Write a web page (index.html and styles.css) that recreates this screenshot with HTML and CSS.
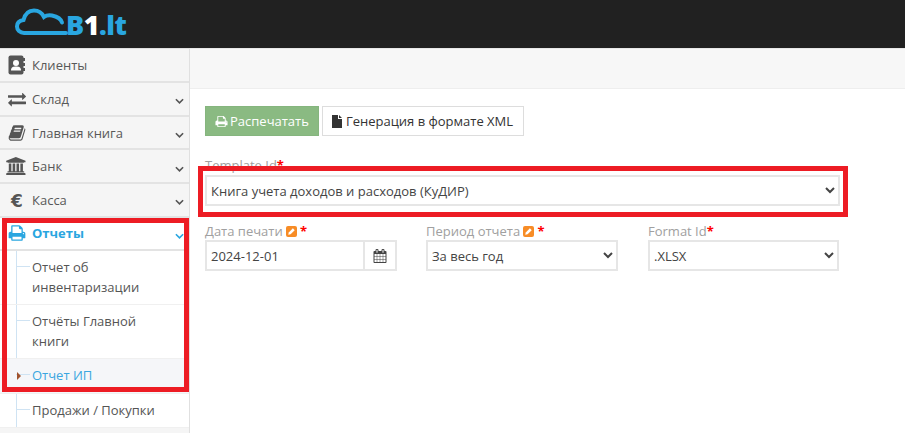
FILE: index.html
```html
<!DOCTYPE html>
<html lang="ru">
<head>
<meta charset="utf-8">
<title>B1.lt</title>
<link rel="stylesheet" href="styles.css">
</head>
<body>
<header class="topbar">
  <div class="logo">
    <svg class="logo-cloud" width="52" height="26" viewBox="0 0 52 26"><path d="M51 24H9C5 24 2 21 2 17.500C2 14 4.500 11.500 8.500 11C10 5 14 1.500 19 1.500C23.500 1.500 27 4 29 8C31 6.500 34 6 37 6.500C42 7.500 46 10 47 13.500" fill="none" stroke="#29a6e0" stroke-width="4" stroke-linecap="round"/></svg>
    <span class="logo-text"><span class="logo-b">B</span><span class="logo-one">1</span><span class="logo-b">.lt</span></span>
  </div>
</header>
<div class="main">
  <nav class="sidebar">
    <a class="item"><span class="ic"><svg width="17" height="20" viewBox="0 0 17 20"><rect x="0.500" y="0.500" width="15" height="19" rx="2" fill="#555"/><rect x="15" y="3" width="2" height="3" fill="#555"/><rect x="15" y="8" width="2" height="3" fill="#555"/><rect x="15" y="13" width="2" height="3" fill="#555"/><circle cx="8" cy="8" r="3" fill="#fff"/><path d="M3 15.500C3 12 5 11.500 8 11.500S13 12 13 15.500Z" fill="#fff"/></svg></span><span class="label">Клиенты</span></a>
    <a class="item"><span class="ic"><svg width="18" height="18" viewBox="0 0 1792 1792"><path fill="#555" d="M1792 1184v192q0 13-9.500 22.500t-22.500 9.500h-1376v192q0 13-9.500 22.500t-22.500 9.500q-12 0-24-10l-319-320q-9-9-9-22 0-14 9-23l320-320q9-9 23-9 13 0 22.500 9.500t9.500 22.500v192h1376q13 0 22.500 9.500t9.500 22.500zm0-544q0 14-9 23l-320 320q-9 9-23 9-13 0-22.500-9.500t-9.500-22.500v-192h-1376q-13 0-22.500-9.500t-9.500-22.500v-192q0-13 9.500-22.500t22.500-9.500h1376v-192q0-14 9-23t23-9q12 0 24 10l319 319q9 9 9 23z"/></svg></span><span class="label">Склад</span><svg class="chev" width="9" height="6" viewBox="0 0 10 6"><path d="M1 1L5 5L9 1" fill="none" stroke="#555" stroke-width="1.800"/></svg></a>
    <a class="item"><span class="ic"><svg width="18" height="18" viewBox="0 0 1792 1792"><path fill="#555" d="M1703 478q40 57 18 129l-275 906q-19 64-76.500 107.500t-122.500 43.500h-923q-77 0-148.500-53.500t-99.500-131.500q-24-67-2-127 0-4 3-27t4-37q1-8-3-21.500t-3-19.500q2-11 8-21t16.500-23.500 16.500-23.500q23-38 45-91.500t30-91.500q3-10 .5-30t-.5-28q3-11 17-28t17-23q21-36 42-92t25-90q1-9-2.500-32t.5-28q4-13 22-30.500t22-22.500q19-26 42.500-84.500t27.500-96.500q1-8-3-25.500t-2-26.500q2-8 9-18t18-23 17-21q8-12 16.500-30.500t15-35 16-36 19.500-32 26.500-23.500 36-11.500 47.500 5.500l-1 3q38-9 51-9h761q74 0 114 56t18 130l-274 906q-36 119-71.500 153.500t-128.500 34.500h-869q-27 0-38 15-11 16-1 43 24 70 144 70h923q29 0 56-15.500t35-41.500l300-987q7-22 5-57 38 15 59 43zm-1064 2q-4 13 2 22.500t20 9.500h608q13 0 25.500-9.500t16.500-22.500l21-64q4-13-2-22.500t-20-9.500h-608q-13 0-25.500 9.500t-16.500 22.500zm-83 256q-4 13 2 22.500t20 9.500h608q13 0 25.500-9.500t16.500-22.500l21-64q4-13-2-22.500t-20-9.500h-608q-13 0-25.500 9.500t-16.500 22.500z"/></svg></span><span class="label">Главная книга</span><svg class="chev" width="9" height="6" viewBox="0 0 10 6"><path d="M1 1L5 5L9 1" fill="none" stroke="#555" stroke-width="1.800"/></svg></a>
    <a class="item"><span class="ic"><svg width="21" height="18" viewBox="0 0 2048 1792"><path fill="#555" d="M960 0l960 384v128h-128q0 26-20.500 45t-48.500 19h-1526q-28 0-48.500-19t-20.500-45h-128v-128zm-704 640h256v768h128v-768h256v768h128v-768h256v768h128v-768h256v768h59q28 0 48.500 19t20.500 45v64h-1664v-64q0-26 20.500-45t48.500-19h59v-768zm1595 960q28 0 48.500 19t20.500 45v128h-1920v-128q0-26 20.500-45t48.500-19h1782z"/></svg></span><span class="label">Банк</span><svg class="chev" width="9" height="6" viewBox="0 0 10 6"><path d="M1 1L5 5L9 1" fill="none" stroke="#555" stroke-width="1.800"/></svg></a>
    <a class="item"><span class="ic ic-euro">€</span><span class="label">Касса</span><svg class="chev" width="9" height="6" viewBox="0 0 10 6"><path d="M1 1L5 5L9 1" fill="none" stroke="#555" stroke-width="1.800"/></svg></a>
    <a class="item item-active"><span class="ic"><svg width="18" height="18" viewBox="0 0 1792 1792"><path fill="#29a6e0" d="M448 1536h896v-256h-896v256zm0-640h896v-384h-160q-40 0-68-28t-28-68v-160h-640v640zm1152 64q0-26-19-45t-45-19-45 19-19 45 19 45 45 19 45-19 19-45zm128 0v416q0 13-9.500 22.500t-22.500 9.500h-224v160q0 40-28 68t-68 28h-960q-40 0-68-28t-28-68v-160h-224q-13 0-22.500-9.500t-9.500-22.500v-416q0-79 56.500-135.500t135.500-56.500h64v-544q0-40 28-68t68-28h672q40 0 88 20t76 48l152 152q28 28 48 76t20 88v256h64q79 0 135.500 56.500t56.500 135.500z"/></svg></span><span class="label">Отчеты</span><svg class="chev" width="9" height="6" viewBox="0 0 10 6"><path d="M1 1L5 5L9 1" fill="none" stroke="#29a6e0" stroke-width="1.800"/></svg></a>
    <ul class="submenu">
      <li class="sub">Отчет об инвентаризации</li>
      <li class="sub">Отчёты Главной книги</li>
      <li class="sub sub-current"><span class="caret"></span>Отчет ИП</li>
      <li class="sub">Продажи / Покупки</li>
    </ul>
  </nav>
  <main class="content">
    <div class="breadcrumbs"></div>
    <div class="body">
      <div class="actions">
        <button class="btn btn-green"><svg width="13" height="13" viewBox="0 0 1792 1792"><path fill="#fff" d="M448 1536h896v-256h-896v256zm0-640h896v-384h-160q-40 0-68-28t-28-68v-160h-640v640zm1152 64q0-26-19-45t-45-19-45 19-19 45 19 45 45 19 45-19 19-45zm128 0v416q0 13-9.500 22.500t-22.500 9.500h-224v160q0 40-28 68t-68 28h-960q-40 0-68-28t-28-68v-160h-224q-13 0-22.500-9.500t-9.500-22.500v-416q0-79 56.500-135.500t135.500-56.500h64v-544q0-40 28-68t68-28h672q40 0 88 20t76 48l152 152q28 28 48 76t20 88v256h64q79 0 135.500 56.500t56.500 135.500z"/></svg>Распечатать</button>
        <button class="btn btn-white"><svg width="10" height="13" viewBox="0 0 10 13"><path d="M0 0H6V4H10V13H0ZM7 0L10 3H7Z" fill="#333"/></svg>Генерация в формате XML</button>
      </div>
      <div class="field field-wide">
        <label class="lbl">Template Id<span class="req">*</span></label>
        <select class="ctl"><option>Книга учета доходов и расходов (КуДИР)</option></select>
      </div>
      <div class="row">
        <div class="field">
          <label class="lbl">Дата печати<span class="edit"><svg width="11" height="11" viewBox="0 0 12 12"><path d="M2.500 9.500L3 7L7.500 2.500L9.500 4.500L5 9Z" fill="#fff"/></svg></span> <span class="req">*</span></label>
          <div class="date"><input class="date-input" value="2024-12-01"><span class="addon"><svg width="14" height="14" viewBox="0 0 1792 1792"><path fill="#444" d="M192 1664h288v-288h-288v288zm352 0h320v-288h-320v288zm-352-352h288v-320h-288v320zm352 0h320v-320h-320v320zm-352-384h288v-288h-288v288zm736 736h320v-288h-320v288zm-384-736h320v-288h-320v288zm768 736h288v-288h-288v288zm-384-352h320v-320h-320v320zm-352-864v-288q0-13-9.500-22.500t-22.500-9.500h-64q-13 0-22.500 9.500t-9.500 22.500v288q0 13 9.500 22.500t22.500 9.500h64q13 0 22.500-9.500t9.500-22.500zm736 864h288v-320h-288v320zm-384-384h320v-288h-320v288zm384 0h288v-288h-288v288zm32-480v-288q0-13-9.500-22.500t-22.500-9.500h-64q-13 0-22.500 9.500t-9.500 22.500v288q0 13 9.500 22.500t22.500 9.500h64q13 0 22.500-9.500t9.500-22.500zm384-64v1280q0 52-38 90t-90 38h-1408q-52 0-90-38t-38-90v-1280q0-52 38-90t90-38h128v-96q0-66 47-113t113-47h64q66 0 113 47t47 113v96h384v-96q0-66 47-113t113-47h64q66 0 113 47t47 113v96h128q52 0 90 38t38 90z"/></svg></span></div>
        </div>
        <div class="field">
          <label class="lbl">Период отчета<span class="edit"><svg width="11" height="11" viewBox="0 0 12 12"><path d="M2.500 9.500L3 7L7.500 2.500L9.500 4.500L5 9Z" fill="#fff"/></svg></span> <span class="req">*</span></label>
          <select class="ctl"><option>За весь год</option></select>
        </div>
        <div class="field field-format">
          <label class="lbl">Format Id<span class="req">*</span></label>
          <select class="ctl"><option>.XLSX</option></select>
        </div>
      </div>
    </div>
  </main>
</div>
<div class="mark mark-side"></div>
<div class="mark mark-form"></div>
</body>
</html>
```
FILE: styles.css
```css
* { box-sizing: border-box; }
html, body { margin: 0; height: 433px; overflow: hidden; }
body { font-family: "Open Sans", sans-serif; font-size: 13px; color: #555; background: #fff; position: relative; }
.topbar { height: 48px; background: #212121; padding: 9px 0 0 15px; }
.logo { display: flex; align-items: flex-start; }
.logo-cloud { flex: none; overflow: visible; }
.logo-text { font-family: "Open Sans", sans-serif; font-weight: 800; font-size: 27px; line-height: 30px; margin-left: -1px; margin-top: 1px; letter-spacing: -.5px; color: #29a6e0; }
.logo-one { color: #fff; }
.main { display: flex; height: 385px; }
.sidebar { width: 190px; flex: none; background: #f5f5f5; border-right: 1px solid #e0e0e0; border-top: 1px solid #e0e0e0; padding-top: .6px; }
.item { display: flex; align-items: center; height: 33.6px; border-bottom: 2px solid #e3e3e3; padding-right: 5px; color: #585858; }
.ic { width: 32px; flex: none; display: flex; justify-content: center; padding-left: 1px; }
.ic-euro { font-family: "DejaVu Sans", sans-serif; font-weight: 700; font-size: 17px; line-height: 20px; color: #555; padding: 2px 0 0 2px; }
.label { flex: 1; font-size: 13px; }
.chev { flex: none; margin-top: 5px; }
.item-active { background: #fff; color: #29a6e0; font-weight: 700; }
.submenu { list-style: none; margin: 0; padding: 0; background: #fff; position: relative; }
.submenu::before { content: ""; position: absolute; left: 16px; top: 0; bottom: 0; border-left: 1px solid #cfe3f3; }
.sub { padding: 7px 20px 7px 32px; line-height: 19.500px; font-size: 13px; border-bottom: 1px solid #f0f0f0; position: relative; color: #555; }
.sub::before { content: ""; position: absolute; left: 16px; top: 15px; width: 14px; border-top: 1px solid #cfe3f3; }
.sub-current { background: #f5f6f9; color: #3aa6e0; }
.caret { position: absolute; left: 17px; top: 13px; border-left: 4px solid #a0522d; border-top: 4px solid transparent; border-bottom: 4px solid transparent; z-index: 1; }
.content { flex: 1; min-width: 0; }
.breadcrumbs { height: 41px; background: #f7f7f7; border-top: 1px solid #e8e8e8; border-bottom: 1px solid #eee; }
.body { padding: 17px 0 0 15px; width: 650px; }
.actions { display: flex; gap: 3px; }
.btn { height: 30px; font: 13px "Open Sans", sans-serif; display: flex; align-items: center; gap: 2px; padding: 0 9px; border: 1px solid #ddd; cursor: pointer; }
.btn-green { background: #8aba82; border-color: #85b57e; color: #fff; }
.btn-white { background: #fff; color: #333; gap: 4px; padding-right: 10px; }
.lbl { display: block; color: #a0a0a0; font-size: 13px; line-height: 16px; height: 16px; white-space: nowrap; }
.req { color: #f00; font-weight: 700; }
.field-wide { margin-top: 21px; }
.field { flex: none; }
.field-wide .ctl { width: 635px; height: 31px; margin-top: 2px; }
.row { display: flex; margin-top: 17px; gap: 29px; }
.row .field { width: 192px; }
.row .field-format { width: 191px; margin-left: 1px; }
.row .field-format .ctl { width: 191px; }
.row .lbl { margin-bottom: 1px; }
.ctl { display: block; width: 192px; height: 31px; font: 13px "Open Sans", sans-serif; color: #444; background: #fff; border: 2px solid #e6e6e6; border-radius: 0; padding: 0; }
.edit { display: inline-flex; width: 11px; height: 11px; background: #f78c26; border-radius: 2px; margin-left: 3px; vertical-align: -1px; }
.date { display: flex; height: 31px; }
.date-input { width: 160px; height: 31px; border: 2px solid #e6e6e6; padding: 0 4px; font: 13px "Open Sans", sans-serif; color: #444; }
.addon { width: 32px; display: flex; align-items: center; justify-content: center; border: 2px solid #e6e6e6; border-left: 0; }
.mark { position: absolute; border: 5px solid #ed1c24; pointer-events: none; }
.mark-side { left: 2px; top: 218px; width: 187px; height: 174px; }
.mark-form { left: 198px; top: 166px; width: 650px; height: 51px; }
```
